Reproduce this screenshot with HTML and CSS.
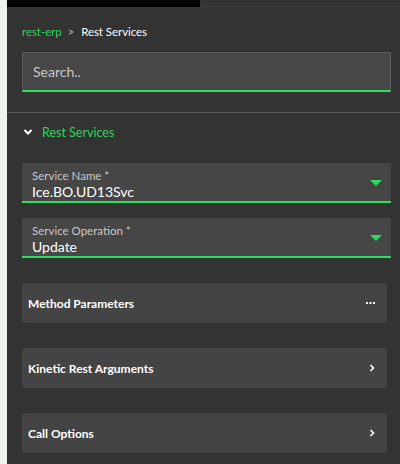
FILE: index.html
```html
<!DOCTYPE html>
<html>
<head>
<meta charset="utf-8">
<link rel="stylesheet" href="styles.css">
</head>
<body>
<div class="page">
  <div class="rail"></div>
  <div class="panel">
    <div class="topbar"><div class="topblack"></div><div class="topdots"></div></div>
    <div class="crumbs"><span class="crumb-link">rest-erp</span><span class="crumb-sep">&gt;</span><span class="crumb-cur">Rest Services</span></div>
    <div class="search"><span class="placeholder">Search..</span></div>
    <div class="divider"></div>
    <div class="section-head">
      <svg class="chev" width="10" height="8" viewBox="0 0 10 8"><path d="M1.5 2 L5 5.5 L8.5 2" fill="none" stroke="#ffffff" stroke-width="2"/></svg>
      <span class="section-title">Rest Services</span>
    </div>
    <div class="field">
      <div class="field-text">
        <div class="field-label">Service Name *</div>
        <div class="field-value">Ice.BO.UD13Svc</div>
      </div>
      <svg class="caret" width="12" height="7" viewBox="0 0 12 7"><path d="M0 0 H12 L6 6 Z" fill="#26e05a"/></svg>
    </div>
    <div class="field">
      <div class="field-text">
        <div class="field-label">Service Operation *</div>
        <div class="field-value">Update</div>
      </div>
      <svg class="caret" width="12" height="7" viewBox="0 0 12 7"><path d="M0 0 H12 L6 6 Z" fill="#26e05a"/></svg>
    </div>
    <div class="cards">
      <div class="card"><span class="card-title">Method Parameters</span>
        <svg width="9" height="4" viewBox="0 0 9 4"><rect x="0" y="1" width="2" height="2" fill="#fff"/><rect x="3.5" y="1" width="2" height="2" fill="#fff"/><rect x="7" y="1" width="2" height="2" fill="#fff"/></svg>
      </div>
      <div class="card"><span class="card-title">Kinetic Rest Arguments</span>
        <svg width="6" height="8" viewBox="0 0 6 8"><path d="M1.5 1 L4.5 4 L1.5 7" fill="none" stroke="#fff" stroke-width="1.6"/></svg>
      </div>
      <div class="card"><span class="card-title">Call Options</span>
        <svg width="6" height="8" viewBox="0 0 6 8"><path d="M1.5 1 L4.5 4 L1.5 7" fill="none" stroke="#fff" stroke-width="1.6"/></svg>
      </div>
    </div>
  </div>
</div>
</body>
</html>
```
FILE: styles.css
```css
html, body { margin: 0; padding: 0; }
body { width: 400px; height: 464px; overflow: hidden; background: #333333; font-family: "Lato", "Noto Sans", sans-serif; }
.page { display: flex; height: 464px; }
.rail { width: 7px; background: #eef3f0; flex: none; }
.panel { flex: 1; background: #333333; display: flex; flex-direction: column; }
.topbar { display: flex; height: 7px; }
.topblack { width: 193px; background: #000; }
.topdots { flex: 1; border-bottom: 1px dotted #4a4a4a; height: 7px; box-sizing: border-box; }
.crumbs { display: flex; align-items: center; height: 14px; margin: 17px 0 0 15px; font-size: 11.4px; }
.crumb-link { color: #2fd35c; }
.crumb-sep { color: #b8c0c8; margin: 0 7px 0 6px; font-size: 11px; }
.crumb-cur { color: #ffffff; }
.search { margin: 14px 9px 0 15px; height: 40px; box-sizing: border-box; background: #474747; border: 1px solid #5c5c5c; border-bottom: 2px solid #2ee05e; display: flex; align-items: center; padding-left: 10px; }
.placeholder { color: #c8c8c8; font-size: 14px; }
.divider { height: 1px; background: #5a5a5a; margin-top: 20px; }
.section-head { display: flex; align-items: center; height: 16px; margin: 11px 0 0 16px; }
.chev { margin-right: 9px; }
.section-title { color: #2fd35c; font-size: 12.5px; }
.field { margin: 0 9px 0 15px; height: 40px; box-sizing: border-box; background: #464646; border-bottom: 2px solid #2ee05e; display: flex; align-items: center; padding: 0 9px 0 10px; }
.section-head + .field { margin-top: 23px; }
.field + .field { margin-top: 15px; }
.field-text { flex: 1; align-self: flex-start; padding-top: 6px; }
.field-label { color: #c8c8c8; font-size: 11.5px; line-height: 14px; }
.field-value { color: #ffffff; font-size: 14px; line-height: 17px; }
.caret { margin-top: 3px; }
.cards { display: flex; flex-direction: column; gap: 25px; margin: 25px 13px 0 15px; }
.card { height: 40px; background: #444444; border-radius: 3px; display: flex; align-items: center; justify-content: space-between; padding: 0 12px 0 6px; }
.card-title { color: #ffffff; font-size: 12px; font-weight: bold; }
```
